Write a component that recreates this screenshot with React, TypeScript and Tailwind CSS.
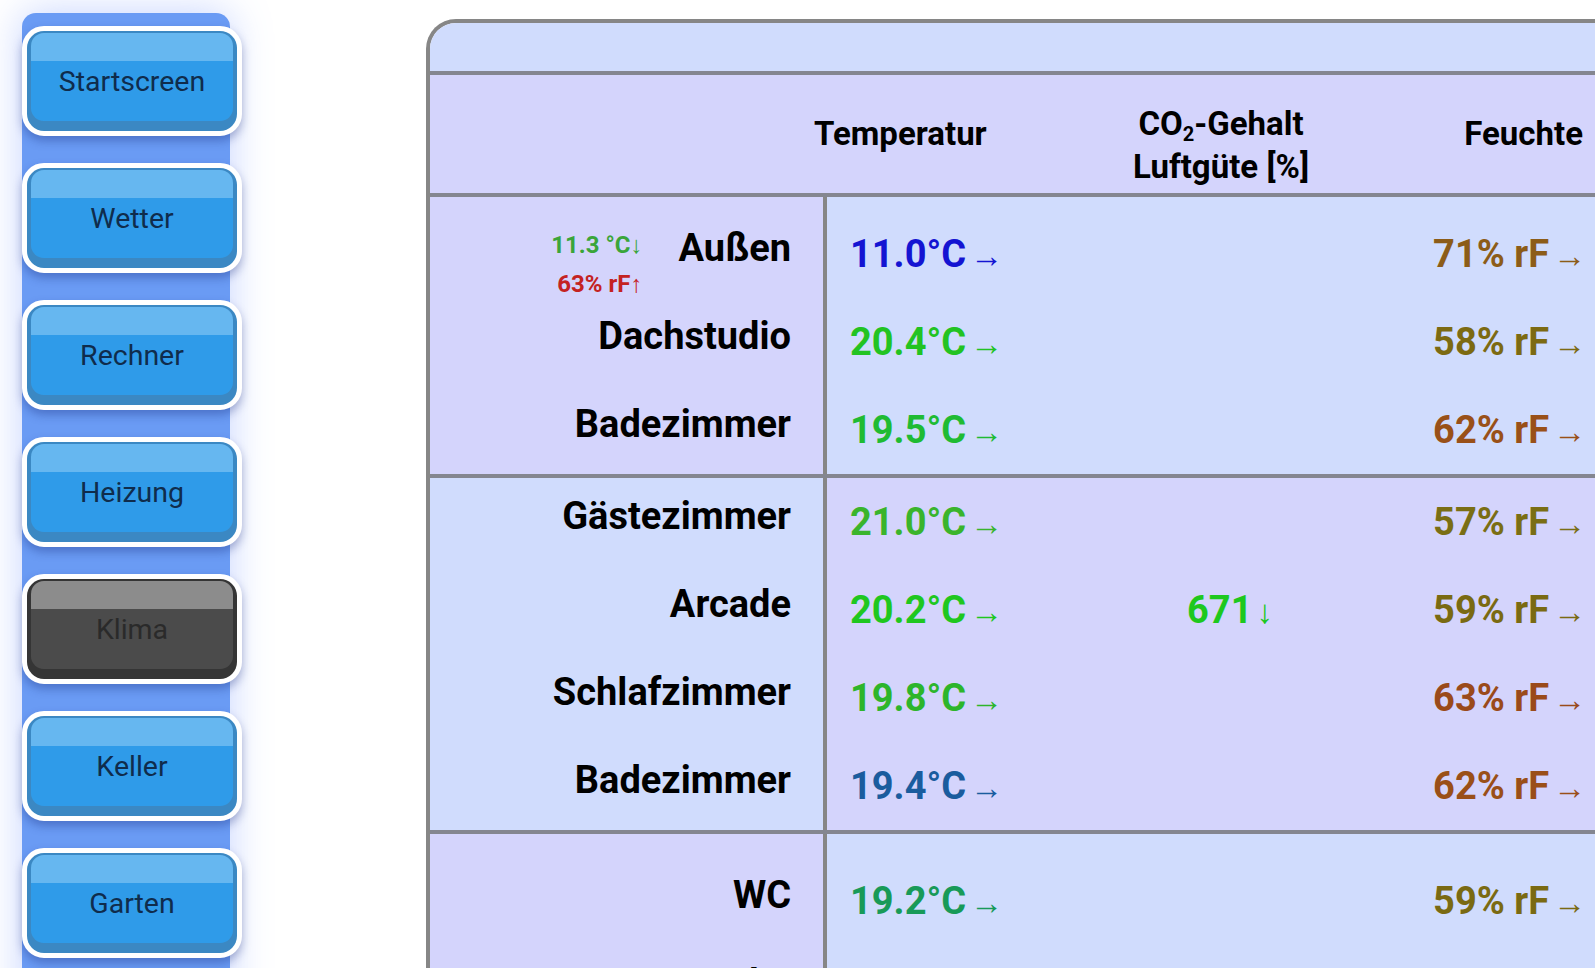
import React from 'react';

type Trend = '→' | '↓' | '↑';

interface Room {
    name: string;
    temp: string;
    tempColor: string;
    hum: string;
    humColor: string;
    co2?: string;
    extra?: boolean;
}

const navItems = ['Startscreen', 'Wetter', 'Rechner', 'Heizung', 'Klima', 'Keller', 'Garten'];

const groups: Room[][] = [
    [
        { name: 'Außen', temp: '11.0°C', tempColor: 'text-[#1414d2]', hum: '71% rF', humColor: 'text-[#8c5c18]', extra: true },
        { name: 'Dachstudio', temp: '20.4°C', tempColor: 'text-[#22c322]', hum: '58% rF', humColor: 'text-[#7c6a12]' },
        { name: 'Badezimmer', temp: '19.5°C', tempColor: 'text-[#1fbb33]', hum: '62% rF', humColor: 'text-[#995018]' },
    ],
    [
        { name: 'Gästezimmer', temp: '21.0°C', tempColor: 'text-[#3ab42c]', hum: '57% rF', humColor: 'text-[#7a6e14]' },
        { name: 'Arcade', temp: '20.2°C', tempColor: 'text-[#1fc71f]', hum: '59% rF', humColor: 'text-[#7a6a12]', co2: '671' },
        { name: 'Schlafzimmer', temp: '19.8°C', tempColor: 'text-[#2db52b]', hum: '63% rF', humColor: 'text-[#9a4a1a]' },
        { name: 'Badezimmer', temp: '19.4°C', tempColor: 'text-[#1a5c9e]', hum: '62% rF', humColor: 'text-[#9a4f18]' },
    ],
    [
        { name: 'WC', temp: '19.2°C', tempColor: 'text-[#189a58]', hum: '59% rF', humColor: 'text-[#7a6a12]' },
        { name: 'Küche', temp: '19.6°C', tempColor: 'text-[#22c322]', hum: '60% rF', humColor: 'text-[#7a6a12]' },
    ],
];

const NavButton: React.FC<{ label: string; active?: boolean }> = ({ label, active }) => (
    <div className="w-[220px] h-[110px] shrink-0 rounded-[22px] border-[5px] border-white bg-white shadow-[0_5px_10px_rgba(20,40,120,0.35)]">
        <div
            className={
                active
                    ? 'h-full rounded-[17px] bg-[#353535] px-[4px] pt-[2px] pb-[10px]'
                    : 'h-full rounded-[17px] bg-[#3b88c3] px-[4px] pt-[2px] pb-[10px]'
            }
        >
            <div
                className={
                    active
                        ? 'h-full rounded-[13px] bg-[linear-gradient(to_bottom,#8c8c8c_0%,#8c8c8c_32%,#4b4b4b_32%,#4b4b4b_100%)] flex items-center justify-center pt-[10px]'
                        : 'h-full rounded-[13px] bg-[linear-gradient(to_bottom,#66b7f0_0%,#66b7f0_32%,#2f9be9_32%,#2f9be9_100%)] flex items-center justify-center pt-[10px]'
                }
            >
                <span className={active ? 'text-[28.5px] text-[#2a2a2a]' : 'text-[28.5px] text-[#0f2c4c]'}>{label}</span>
            </div>
        </div>
    </div>
);

const Arrow: React.FC<{ t?: Trend }> = ({ t = '→' }) => (
    <span className="text-[33px] font-normal ml-[4px]">{t}</span>
);

export default function App() {
    return (
        <div
            className="w-[1595px] h-[968px] overflow-hidden bg-white flex items-start"
            style={{ fontFamily: 'Roboto, "Noto Sans", sans-serif' }}
        >
            {/* Sidebar */}
            <div className="ml-[22px] mt-[13px] w-[208px] h-[1000px] shrink-0 rounded-t-[14px] bg-[#6a9bf4] shadow-[0_0_40px_rgba(90,130,255,0.35)] pt-[13px] flex flex-col gap-[27px]">
                {navItems.map((item) => (
                    <NavButton key={item} label={item} active={item === 'Klima'} />
                ))}
            </div>

            {/* Table */}
            <div className="ml-[196px] mt-[19px] w-[1180px] shrink-0 rounded-tl-[30px] border-[4px] border-b-0 border-r-0 border-[#868686] overflow-hidden text-black">
                <div className="h-[52px] bg-[#d0dcfd] border-b-[4px] border-[#848690]" />

                {/* Header */}
                <div className="h-[122px] bg-[#d4d4fc] border-b-[4px] border-[#848690] flex items-center font-bold text-[33px]">
                    <div className="w-[384px] shrink-0" />
                    <div className="w-[200px] shrink-0">Temperatur</div>
                    <div className="w-[414px] shrink-0 text-center leading-[43px] pt-[22px]">
                        <div>
                            CO<sub className="text-[20px] align-baseline relative top-[6px]">2</sub>-Gehalt
                        </div>
                        <div>Luftgüte [%]</div>
                    </div>
                    <div className="flex-1 text-right pr-[23px]">Feuchte</div>
                </div>

                {/* Groups */}
                {groups.map((rooms, gi) => {
                    const odd = gi % 2 === 1;
                    const pt = gi === 0 ? 'pt-[13px]' : gi === 1 ? 'pt-[0px]' : 'pt-[23px]';
                    return (
                        <div
                            key={gi}
                            className={gi < groups.length - 1 ? 'flex border-b-[4px] border-[#848690]' : 'flex'}
                        >
                            <div
                                className={
                                    (odd ? 'bg-[#d0dcfd] ' : 'bg-[#d4d4fc] ') +
                                    'w-[397px] shrink-0 border-r-[4px] border-[#868686] ' +
                                    pt
                                }
                            >
                                {rooms.map((r, ri) => (
                                    <div key={ri} className="h-[88px] flex items-start justify-end pt-[18px] pr-[32px]">
                                        {r.extra && (
                                            <div className="flex flex-col items-end mr-[36px] -mt-[2px] font-bold text-[24px] leading-[39px]">
                                                <span className="text-[#3aa53a]">
                                                    11.3 °C<span className="font-normal">↓</span>
                                                </span>
                                                <span className="text-[#c42222]">
                                                    63% rF<span className="font-normal">↑</span>
                                                </span>
                                            </div>
                                        )}
                                        <span className="font-bold text-[38px] leading-[40px]">{r.name}</span>
                                    </div>
                                ))}
                            </div>
                            <div className={(odd ? 'bg-[#d4d4fc] ' : 'bg-[#d0dcfd] ') + 'flex-1 ' + pt}>
                                {rooms.map((r, ri) => (
                                    <div key={ri} className="h-[88px] flex items-center font-bold text-[38px]">
                                        <div className={'w-[263px] shrink-0 pl-[23px] ' + r.tempColor}>
                                            {r.temp}
                                            <Arrow />
                                        </div>
                                        <div className="w-[280px] shrink-0 text-center text-[#1ec81e]">
                                            {r.co2 && (
                                                <>
                                                    {r.co2}
                                                    <Arrow t="↓" />
                                                </>
                                            )}
                                        </div>
                                        <div className={'flex-1 text-right pr-[20px] ' + r.humColor}>
                                            {r.hum}
                                            <Arrow />
                                        </div>
                                    </div>
                                ))}
                            </div>
                        </div>
                    );
                })}
            </div>
        </div>
    );
}
